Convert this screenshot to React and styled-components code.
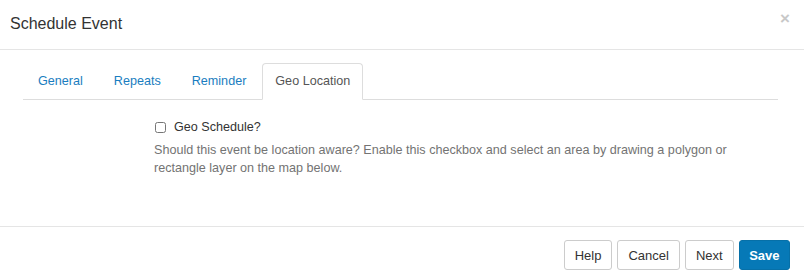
import React, { useState } from 'react'
import styled, { createGlobalStyle } from 'styled-components'

const Global = createGlobalStyle`
  html, body { margin: 0; padding: 0; background: #fff; }
  body {
    font-family: "Liberation Sans", Arial, sans-serif;
    font-size: 13px;
    color: #333;
  }
  * { box-sizing: border-box; }
`

const Modal = styled.div`
  width: 804px;
  height: 279px;
  background: #fff;
  display: flex;
  flex-direction: column;
`

const Header = styled.div`
  position: relative;
  height: 50px;
  padding: 12px 10px 0 10px;
  border-bottom: 1px solid #e5e5e5;
`

const Title = styled.h4`
  margin: 0;
  font-size: 16px;
  line-height: 24px;
  font-weight: normal;
  color: #333;
`

const Close = styled.button`
  position: absolute;
  top: 9px;
  right: 14px;
  border: 0;
  background: none;
  padding: 0;
  font-family: "Liberation Sans", Arial, sans-serif;
  font-size: 17px;
  font-weight: bold;
  line-height: 20px;
  color: #c8c8c8;
  cursor: pointer;
`

const Body = styled.div`
  flex: 1;
  padding: 13px 26px 0 23px;
`

const Tabs = styled.ul`
  list-style: none;
  margin: 0;
  padding: 0;
  display: flex;
  border-bottom: 1px solid #ddd;
`

const Tab = styled.li`
  margin-right: 1px;
  margin-bottom: -1px;
  padding: 8px ${p => (p.$active ? '12px' : '14px')};
  line-height: 19px;
  font-size: 12.6px;
  border: 1px solid ${p => (p.$active ? '#ddd' : 'transparent')};
  border-bottom-color: ${p => (p.$active ? '#fff' : 'transparent')};
  border-radius: 4px 4px 0 0;
  background: ${p => (p.$active ? '#fff' : 'transparent')};
  color: ${p => (p.$active ? '#555' : '#1a7dc0')};
  cursor: pointer;
`

const Pane = styled.div`
  padding: 19px 0 0 131px;
`

const CheckRow = styled.label`
  display: flex;
  align-items: center;
  gap: 8px;
  height: 16px;
  color: #333;
  font-size: 12.6px;
`

const Check = styled.input`
  margin: 0 0 0 1px;
  width: 11px;
  height: 11px;
`

const Help = styled.p`
  margin: 6px 0 0 0;
  color: #737373;
  font-size: 12.6px;
  line-height: 18px;
  max-width: 600px;
`

const Footer = styled.div`
  height: 53px;
  border-top: 1px solid #e5e5e5;
  padding: 13px 14px 0 0;
  display: flex;
  justify-content: flex-end;
  gap: 5px;
`

const Button = styled.button`
  height: 30px;
  padding: 0 ${p => (p.$primary ? '9.5px' : '10px')};
  font-family: "Liberation Sans", Arial, sans-serif;
  font-size: 13px;
  font-weight: ${p => (p.$primary ? 'bold' : 'normal')};
  border-radius: 3px;
  border: 1px solid ${p => (p.$primary ? '#0670a8' : '#ccc')};
  background: ${p => (p.$primary ? '#0679b7' : '#fff')};
  color: ${p => (p.$primary ? '#fff' : '#333')};
  cursor: pointer;
`

const tabs = ['General', 'Repeats', 'Reminder', 'Geo Location']

export default function App() {
  const [active, setActive] = useState('Geo Location')
  return (
    <>
      <Global />
      <Modal>
        <Header>
          <Title>Schedule Event</Title>
          <Close>×</Close>
        </Header>
        <Body>
          <Tabs>
            {tabs.map(t => (
              <Tab key={t} $active={t === active} onClick={() => setActive(t)}>
                {t}
              </Tab>
            ))}
          </Tabs>
          <Pane>
            <CheckRow>
              <Check type="checkbox" />
              Geo Schedule?
            </CheckRow>
            <Help>
              Should this event be location aware? Enable this checkbox and select an area by drawing a polygon or
              rectangle layer on the map below.
            </Help>
          </Pane>
        </Body>
        <Footer>
          <Button>Help</Button>
          <Button>Cancel</Button>
          <Button>Next</Button>
          <Button $primary>Save</Button>
        </Footer>
      </Modal>
    </>
  )
}
